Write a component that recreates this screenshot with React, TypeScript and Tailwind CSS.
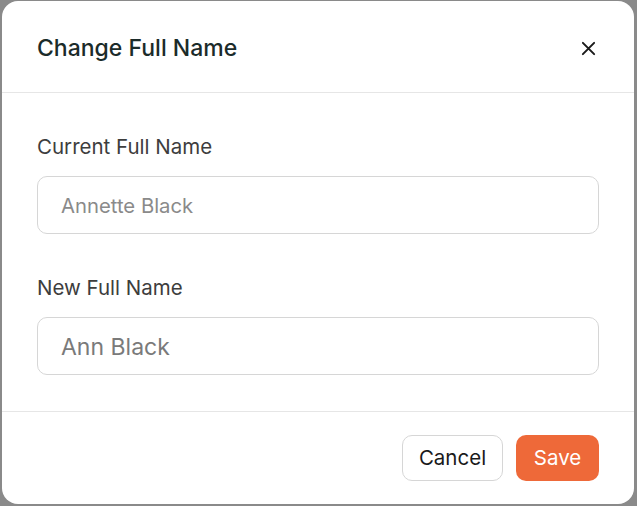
import React from 'react';

const font = { fontFamily: 'Inter, "Noto Sans", sans-serif' };

export default function App() {
  return (
    <div className="h-[506px] w-full bg-[#8a8a8a] pt-px pl-[2px] pr-[3px] pb-[2px] flex" style={font}>
      <div className="flex-1 flex flex-col bg-white rounded-[16px] overflow-hidden">
        {/* Header */}
        <div className="h-[92px] flex items-center justify-between pl-[35px] pr-[38px] pt-[3px] border-b border-[#e6e6e6]">
          <h2 className="text-[23px] font-medium text-[#1b2b2a]">Change Full Name</h2>
          <button className="text-[#1a1a1a]">
            <svg className="w-[15px] h-[15px]" viewBox="0 0 16 16" fill="none" stroke="currentColor" strokeWidth={2.1} strokeLinecap="round">
              <path d="M2 2l12 12M14 2L2 14" />
            </svg>
          </button>
        </div>
        {/* Body */}
        <div className="flex-1 flex flex-col px-[35px] pt-[42px]">
          <label className="text-[20.5px] leading-[24px] text-[#3d3d3d]">Current Full Name</label>
          <input
            className="mt-[17px] h-[58px] rounded-[10px] border border-[#d6d6d6] px-[23px] text-[20.3px] text-[#333] placeholder:text-[#8a8a8a] outline-none"
            placeholder="Annette Black"
            style={font}
          />
          <label className="mt-[42px] text-[20.5px] leading-[24px] text-[#3d3d3d]">New Full Name</label>
          <input
            className="mt-[17px] h-[58px] rounded-[10px] border border-[#d6d6d6] px-[23px] pt-[2px] text-[23px] text-[#7a7a7a] outline-none"
            defaultValue="Ann Black"
            style={font}
          />
        </div>
        {/* Footer */}
        <div className="h-[93px] flex items-center justify-end gap-[13px] pr-[35px] border-t border-[#e6e6e6]">
          <button className="h-[46px] w-[101px] rounded-[10px] border border-[#d6d6d6] text-[20.5px] text-[#1a1a1a]">Cancel</button>
          <button className="h-[46px] w-[83px] rounded-[10px] bg-[#ee6939] text-[20.5px] text-white">Save</button>
        </div>
      </div>
    </div>
  );
}
